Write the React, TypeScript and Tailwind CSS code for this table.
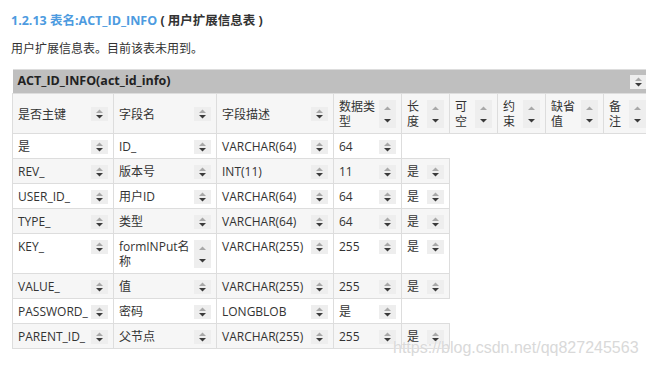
const FONT = '[font-family:"Open_Sans","Noto_Sans_CJK_SC",sans-serif]'

const colClass = ['w-[101px]', 'w-[103px]', 'w-[117px]', 'w-[68px]', 'w-[48px]', 'w-[48px]', 'w-[48px]', 'w-[58px]', 'w-[48px]']

const headers = ['是否主键', '字段名', '字段描述', '数据类型', '长度', '可空', '约束', '缺省值', '备注']
const tallHeaders = [3, 4, 5, 6, 7, 8]

const rows: string[][] = [
  ['是', 'ID_', 'VARCHAR(64)', '64'],
  ['REV_', '版本号', 'INT(11)', '11', '是'],
  ['USER_ID_', '用户ID', 'VARCHAR(64)', '64', '是'],
  ['TYPE_', '类型', 'VARCHAR(64)', '64', '是'],
  ['KEY_', 'formINPut名称', 'VARCHAR(255)', '255', '是'],
  ['VALUE_', '值', 'VARCHAR(255)', '255', '是'],
  ['PASSWORD_', '密码', 'LONGBLOB', '是'],
  ['PARENT_ID_', '父节点', 'VARCHAR(255)', '255', '是'],
]

function SortBox({ tall = false }: { tall?: boolean }) {
  if (tall) {
    return (
      <span className="ml-auto flex h-[28px] w-[17px] shrink-0 bg-[#eeeeee]">
        <svg width="17" height="28" viewBox="0 0 17 28">
          <polygon points="5,10 12,10 8.5,6.5" fill="#a8a8a8" />
          <polygon points="5,19 12,19 8.5,22.5" fill="#3a3a3a" />
        </svg>
      </span>
    )
  }
  return (
    <span className="ml-auto flex h-[14px] w-[17px] shrink-0 bg-[#eeeeee]">
      <svg width="17" height="14" viewBox="0 0 17 14">
        <polygon points="5,6 12,6 8.5,2.5" fill="#a8a8a8" />
        <polygon points="5,8 12,8 8.5,11.5" fill="#3a3a3a" />
      </svg>
    </span>
  )
}

function Cell({ text, tall }: { text: string; tall?: boolean }) {
  return (
    <div className="flex items-center gap-[3px] px-[5px] pt-[5px] pb-[4px] leading-[15px]">
      <span className="min-w-0 flex-1">{text}</span>
      <SortBox tall={tall} />
    </div>
  )
}

export default function App() {
  return (
    <div className={`relative h-[366px] w-[646px] overflow-hidden bg-white text-[12px] text-[#333] ${FONT}`}>
      <div className="px-[11px] pt-[11px]">
        <h3 className="h-[20px] text-[12.5px] font-bold leading-[20px]">
          <span className="text-[#4d9be0]">1.2.13 表名:ACT_ID_INFO</span>
          <span className="text-[#333]"> ( 用户扩展信息表 )</span>
        </h3>
        <p className="mt-[8px] h-[20px] leading-[20px]">用户扩展信息表。目前该表未用到。</p>
      </div>

      <table className="mt-[10px] ml-[12px] w-[639px] table-fixed border-collapse">
        <colgroup>
          {colClass.map((c, i) => (
            <col key={i} className={c} />
          ))}
        </colgroup>
        <thead>
          <tr>
            <th colSpan={9} className="border-t border-[#dddddd] bg-[#bfbfbf] p-0 text-left">
              <div className="flex h-[23px] items-center px-[5px] text-[12.5px] font-bold text-[#222]">
                <span>ACT_ID_INFO(act_id_info)</span>
                <SortBox />
              </div>
            </th>
          </tr>
          <tr>
            {headers.map((h, i) => (
              <th key={h} className="border border-[#dddddd] bg-[#f6f6f6] p-0 text-left align-middle font-normal">
                <Cell text={h} tall={tallHeaders.includes(i)} />
              </th>
            ))}
          </tr>
        </thead>
        <tbody>
          {rows.map((r, ri) => (
            <tr key={r[0]}>
              {r.map((c, ci) => (
                <td
                  key={ci}
                  className={`border border-[#dddddd] p-0 align-top ${ri % 2 === 1 ? 'bg-[#f6f6f6]' : 'bg-white'}`}
                >
                  <Cell text={c} tall={c === 'formINPut名称'} />
                </td>
              ))}
            </tr>
          ))}
        </tbody>
      </table>

      <div className="absolute left-[393px] top-[337px] whitespace-nowrap text-[16px] leading-[22px] text-[#d9d9d9] [font-family:'Liberation_Sans',sans-serif] [text-shadow:0_0_1px_#fff]">
        https://blog.csdn.net/qq827245563
      </div>
    </div>
  )
}
